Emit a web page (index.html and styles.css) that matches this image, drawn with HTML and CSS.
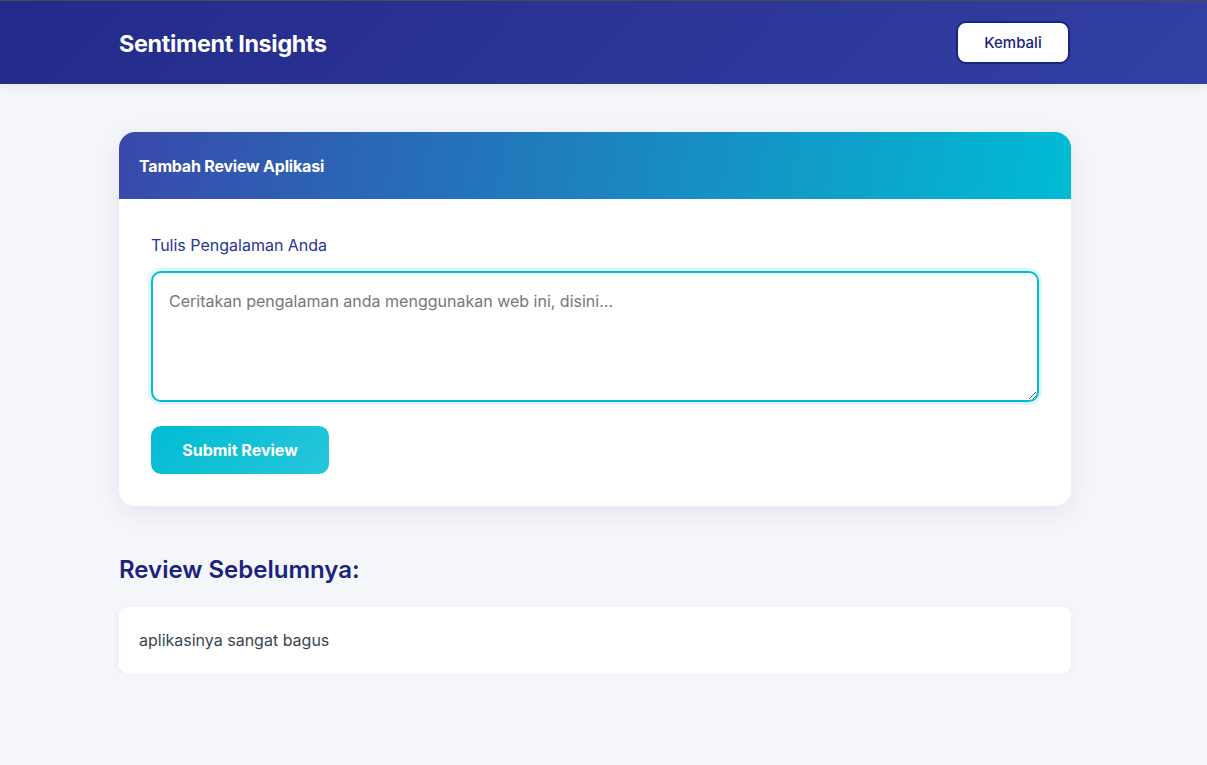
FILE: index.html
```html
<!DOCTYPE html>
<html lang="id">
<head>
<meta charset="utf-8">
<title>Sentiment Insights</title>
<link rel="stylesheet" href="styles.css">
</head>
<body>
<header class="topbar">
  <div class="container topbar-inner">
    <h1 class="brand">Sentiment Insights</h1>
    <button class="btn-back">Kembali</button>
  </div>
</header>
<main class="container main">
  <section class="card">
    <div class="card-header">Tambah Review Aplikasi</div>
    <div class="card-body">
      <label class="label" for="review">Tulis Pengalaman Anda</label>
      <textarea id="review" class="textarea" placeholder="Ceritakan pengalaman anda menggunakan web ini, disini..."></textarea>
      <button class="btn-submit">Submit Review</button>
    </div>
  </section>
  <h2 class="section-title">Review Sebelumnya:</h2>
  <div class="review-item">aplikasinya sangat bagus</div>
</main>
</body>
</html>
```
FILE: styles.css
```css
* { box-sizing: border-box; }
html, body { margin: 0; padding: 0; }
body {
  background: #f5f6fa;
  font-family: Inter, "Open Sans", sans-serif;
  color: #1a237e;
}
.container {
  width: 952px;
  margin: 0 136px 0 119px;
}
.topbar {
  background: linear-gradient(135deg, #232a89 0%, #3240a3 100%);
  border-top: 1px solid #4a4a52;
  height: 84px;
  box-shadow: 0 2px 10px rgba(0,0,0,0.08);
}
.topbar-inner {
  height: 83px;
  display: flex;
  align-items: center;
  justify-content: space-between;
}
.brand {
  margin: 0;
  color: #fff;
  font-size: 23.3px;
  font-weight: 700;
  letter-spacing: -0.3px;
  padding-top: 1px;
}
.btn-back {
  width: 114px;
  height: 43px;
  margin-right: 1px;
  background: #fff;
  border: 2px solid #1a237e;
  border-radius: 10px;
  color: #1a237e;
  font-family: inherit;
  font-size: 15px;
  font-weight: 500;
}
.main { padding-top: 48px; }
.card {
  background: #fff;
  border-radius: 16px;
  overflow: hidden;
  box-shadow: 0 6px 24px rgba(30,40,90,0.08);
}
.card-header {
  height: 67px;
  display: flex;
  align-items: center;
  padding: 0 20px;
  background: linear-gradient(100deg, #3949ab 0%, #00bcd4 100%);
  color: #fff;
  font-size: 16px;
  font-weight: 700;
  letter-spacing: -0.2px;
}
.card-body {
  padding: 36px 32px 32px;
  display: flex;
  flex-direction: column;
  align-items: flex-start;
}
.label {
  font-size: 16px;
  color: #283593;
  line-height: 20px;
  margin-bottom: 16px;
}
.textarea {
  width: 888px;
  height: 131px;
  border: 2px solid #00bcd4;
  border-radius: 10px;
  box-shadow: 0 0 0 3px rgba(0,188,212,0.12);
  padding: 16px;
  font-family: inherit;
  font-size: 16px;
  line-height: 24px;
  color: #333;
  resize: vertical;
  outline: none;
}
.textarea::placeholder { color: #777; }
.btn-submit {
  margin-top: 24px;
  width: 178px;
  height: 48px;
  border: none;
  border-radius: 10px;
  background: linear-gradient(135deg, #00bcd4 0%, #26c6da 100%);
  color: #fff;
  font-family: inherit;
  font-size: 16px;
  font-weight: 700;
}
.section-title {
  margin: 48px 0 21px;
  font-size: 24px;
  font-weight: 600;
  color: #1a237e;
  line-height: 32px;
}
.review-item {
  background: #fff;
  border-radius: 8px;
  height: 66px;
  padding: 0 20px;
  display: flex;
  align-items: center;
  font-size: 16px;
  color: #37474f;
  box-shadow: 0 2px 8px rgba(30,40,90,0.05);
}
```
